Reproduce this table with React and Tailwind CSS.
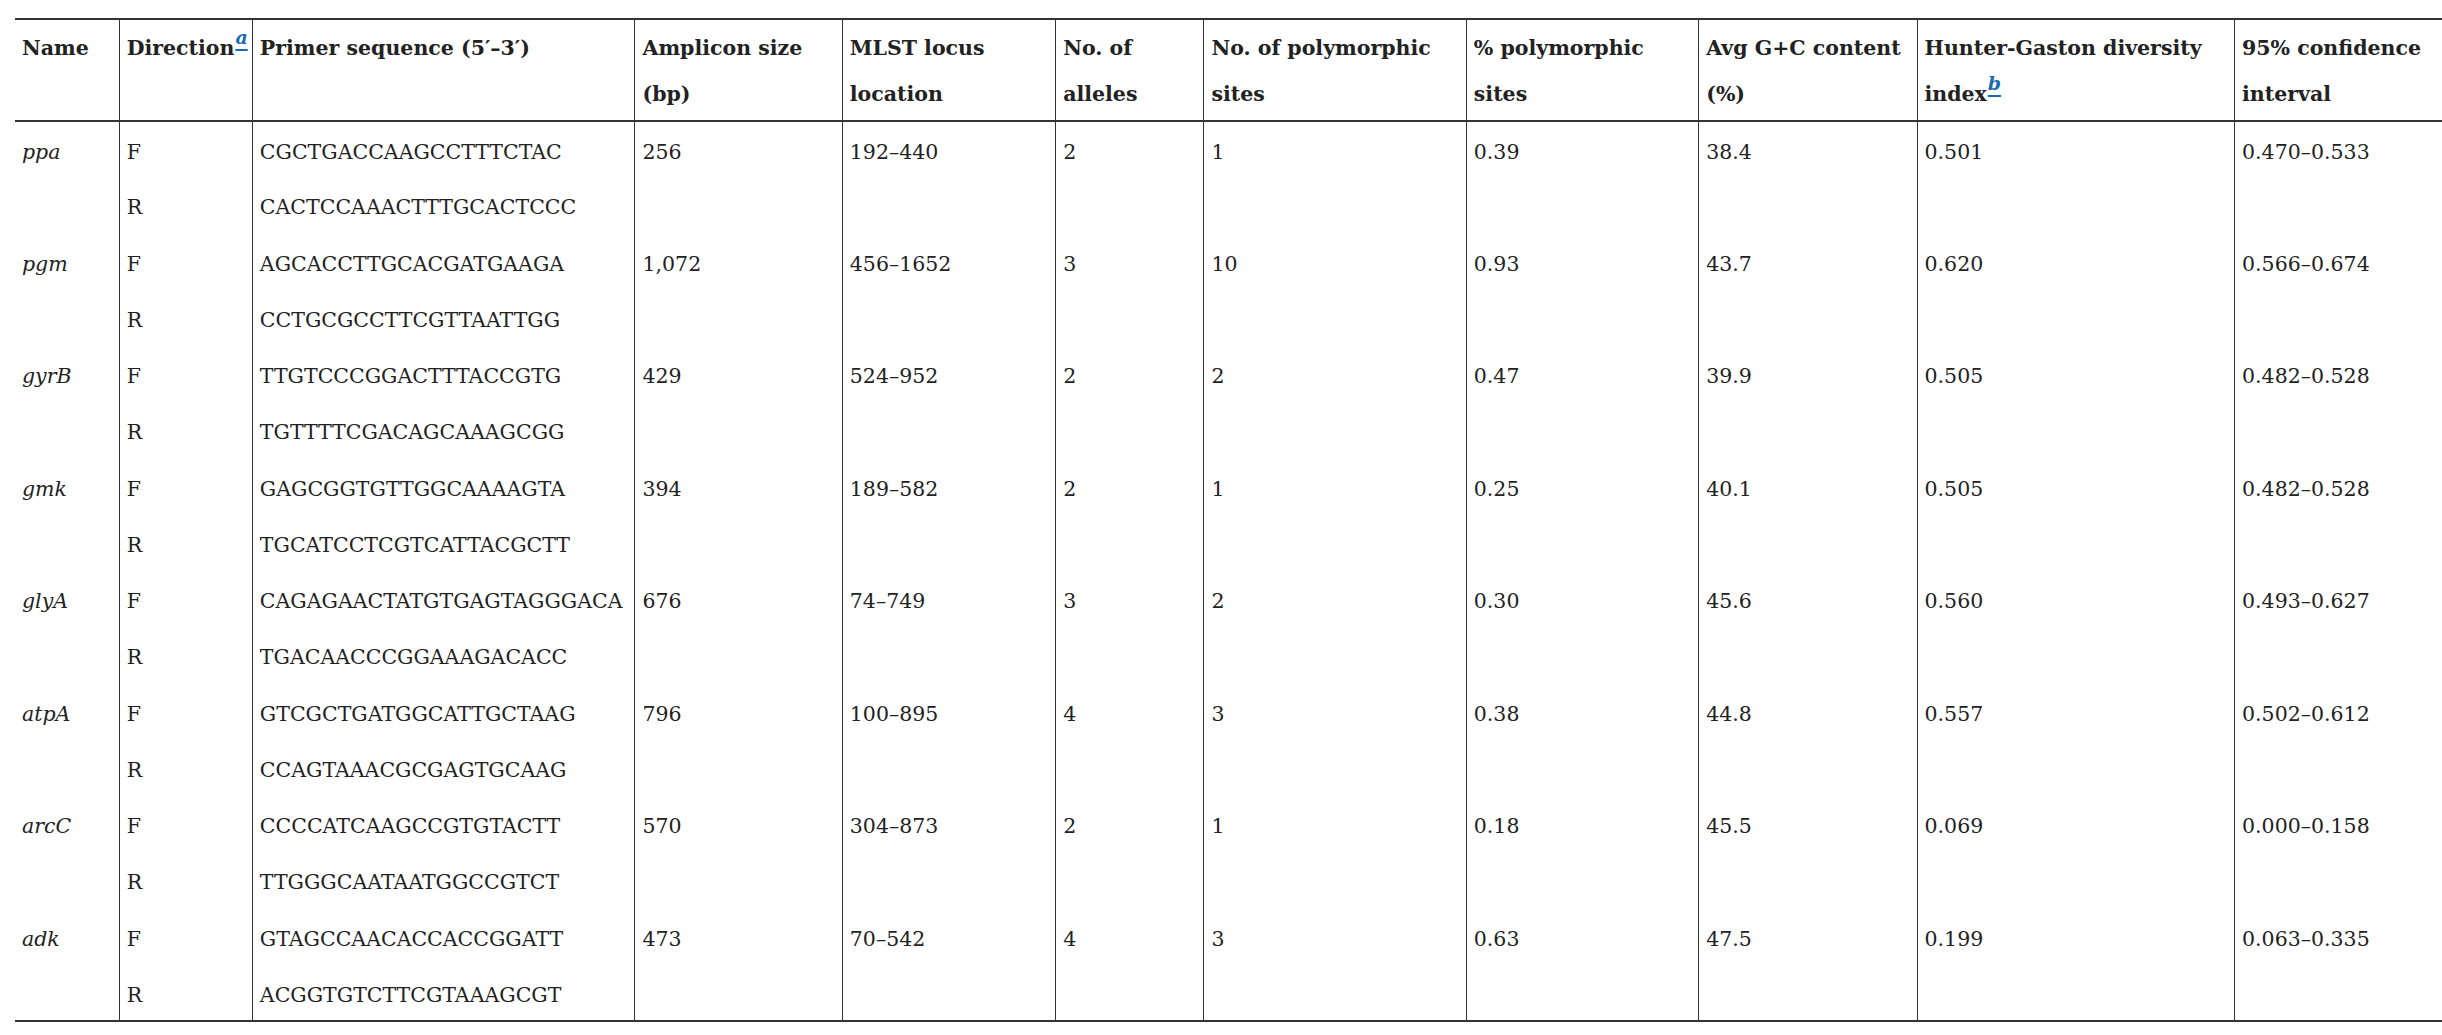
const genes = [
  { name: 'ppa', f: 'CGCTGACCAAGCCTTTCTAC', r: 'CACTCCAAACTTTGCACTCCC', size: '256', locus: '192–440', alleles: '2', sites: '1', pct: '0.39', gc: '38.4', hg: '0.501', ci: '0.470–0.533' },
  { name: 'pgm', f: 'AGCACCTTGCACGATGAAGA', r: 'CCTGCGCCTTCGTTAATTGG', size: '1,072', locus: '456–1652', alleles: '3', sites: '10', pct: '0.93', gc: '43.7', hg: '0.620', ci: '0.566–0.674' },
  { name: 'gyrB', f: 'TTGTCCCGGACTTTACCGTG', r: 'TGTTTTCGACAGCAAAGCGG', size: '429', locus: '524–952', alleles: '2', sites: '2', pct: '0.47', gc: '39.9', hg: '0.505', ci: '0.482–0.528' },
  { name: 'gmk', f: 'GAGCGGTGTTGGCAAAAGTA', r: 'TGCATCCTCGTCATTACGCTT', size: '394', locus: '189–582', alleles: '2', sites: '1', pct: '0.25', gc: '40.1', hg: '0.505', ci: '0.482–0.528' },
  { name: 'glyA', f: 'CAGAGAACTATGTGAGTAGGGACA', r: 'TGACAACCCGGAAAGACACC', size: '676', locus: '74–749', alleles: '3', sites: '2', pct: '0.30', gc: '45.6', hg: '0.560', ci: '0.493–0.627' },
  { name: 'atpA', f: 'GTCGCTGATGGCATTGCTAAG', r: 'CCAGTAAACGCGAGTGCAAG', size: '796', locus: '100–895', alleles: '4', sites: '3', pct: '0.38', gc: '44.8', hg: '0.557', ci: '0.502–0.612' },
  { name: 'arcC', f: 'CCCCATCAAGCCGTGTACTT', r: 'TTGGGCAATAATGGCCGTCT', size: '570', locus: '304–873', alleles: '2', sites: '1', pct: '0.18', gc: '45.5', hg: '0.069', ci: '0.000–0.158' },
  { name: 'adk', f: 'GTAGCCAACACCACCGGATT', r: 'ACGGTGTCTTCGTAAAGCGT', size: '473', locus: '70–542', alleles: '4', sites: '3', pct: '0.63', gc: '47.5', hg: '0.199', ci: '0.063–0.335' },
];

const widths = [104, 133, 382, 207, 213, 148, 262, 232, 218, 317, 220];

function Note({ children }) {
  return (
    <sup className="text-[#1a6bb0] italic underline decoration-2 underline-offset-[5px] text-[19px] leading-none ml-[1px] top-[-0.6em]">{children}</sup>
  );
}

const th = 'align-top text-left font-bold pl-[7px] pr-2 pt-[5px] pb-[3px] leading-[46px] border-l border-[#333] first:border-l-0 whitespace-nowrap';
const td = 'align-top text-left pl-[7px] pr-2 pt-[15px] leading-[30px] h-[56.25px] border-l border-[#333] first:border-l-0 whitespace-nowrap';

export default function App() {
  return (
    <div className="w-full min-h-screen bg-white overflow-hidden pl-[15px] pt-[18px] text-[#222] font-['DejaVu_Serif',serif] text-[20.5px]">
      <table className="table-fixed border-collapse w-[2440px]">
        <colgroup>
          {widths.map((w, i) => (
            <col key={i} style={{ width: w }} />
          ))}
        </colgroup>
        <thead>
          <tr className="border-t-2 border-b-2 border-[#333]">
            <th className={th}>Name</th>
            <th className={th}>Direction<Note>a</Note></th>
            <th className={th}>Primer sequence (5′–3′)</th>
            <th className={th}>Amplicon size<br />(bp)</th>
            <th className={th}>MLST locus<br />location</th>
            <th className={th}>No. of<br />alleles</th>
            <th className={th}>No. of polymorphic<br />sites</th>
            <th className={th}>% polymorphic<br />sites</th>
            <th className={th}>Avg G+C content<br />(%)</th>
            <th className={th}>Hunter-Gaston diversity<br />index<Note>b</Note></th>
            <th className={th}>95% confidence<br />interval</th>
          </tr>
        </thead>
        <tbody className="border-b-2 border-[#333]">
          {genes.map((g) => [
            <tr key={g.name + 'f'}>
              <td className={td + ' italic'}>{g.name}</td>
              <td className={td}>F</td>
              <td className={td}>{g.f}</td>
              <td className={td}>{g.size}</td>
              <td className={td}>{g.locus}</td>
              <td className={td}>{g.alleles}</td>
              <td className={td}>{g.sites}</td>
              <td className={td}>{g.pct}</td>
              <td className={td}>{g.gc}</td>
              <td className={td}>{g.hg}</td>
              <td className={td}>{g.ci}</td>
            </tr>,
            <tr key={g.name + 'r'}>
              <td className={td}></td>
              <td className={td}>R</td>
              <td className={td}>{g.r}</td>
              <td className={td}></td>
              <td className={td}></td>
              <td className={td}></td>
              <td className={td}></td>
              <td className={td}></td>
              <td className={td}></td>
              <td className={td}></td>
              <td className={td}></td>
            </tr>,
          ])}
        </tbody>
      </table>
    </div>
  );
}
